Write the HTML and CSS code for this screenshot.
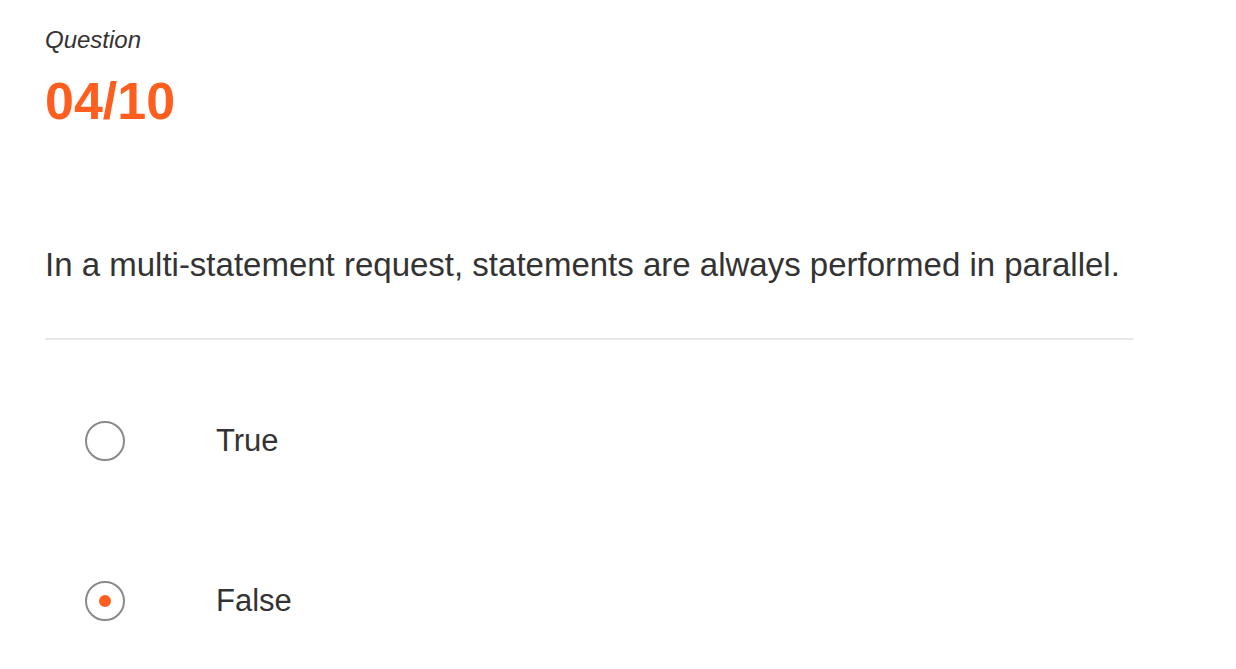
FILE: index.html
```html
<!DOCTYPE html>
<html>
<head>
<meta charset="utf-8">
<link rel="stylesheet" href="styles.css">
</head>
<body>
<main class="quiz">
  <div class="label">Question</div>
  <div class="counter">04/10</div>
  <p class="prompt">In a multi-statement request, statements are always performed in parallel.</p>
  <hr class="divider">
  <ul class="options">
    <li class="option"><span class="radio"></span><span class="opt-text">True</span></li>
    <li class="option"><span class="radio checked"></span><span class="opt-text">False</span></li>
  </ul>
</main>
</body>
</html>
```
FILE: styles.css
```css
html, body {
  margin: 0;
  padding: 0;
  background: #fff;
}
body {
  font-family: "Liberation Sans", Arial, sans-serif;
  color: #333;
}
.quiz {
  padding: 26px 0 0 45px;
  width: 1088px;
}
.label {
  font-style: italic;
  font-size: 24px;
  line-height: 28px;
  color: #333;
}
.counter {
  margin-top: 18px;
  font-size: 52px;
  line-height: 58px;
  font-weight: bold;
  color: #ff5e1f;
}
.prompt {
  margin: 115px 0 0;
  font-size: 33px;
  line-height: 40px;
}
.divider {
  margin: 53px 0 0;
  border: 0;
  height: 2px;
  background: #e8e8e8;
}
.options {
  list-style: none;
  margin: 0;
  padding: 21px 0 0 40px;
}
.option {
  display: flex;
  align-items: center;
  height: 160px;
}
.radio {
  box-sizing: border-box;
  width: 40px;
  height: 40px;
  border: 2px solid #8a8a8a;
  border-radius: 50%;
  display: flex;
  align-items: center;
  justify-content: center;
}
.radio.checked::after {
  content: "";
  width: 12px;
  height: 12px;
  border-radius: 50%;
  background: #ff5e1f;
}
.opt-text {
  margin-left: 91px;
  font-size: 31px;
}
```
